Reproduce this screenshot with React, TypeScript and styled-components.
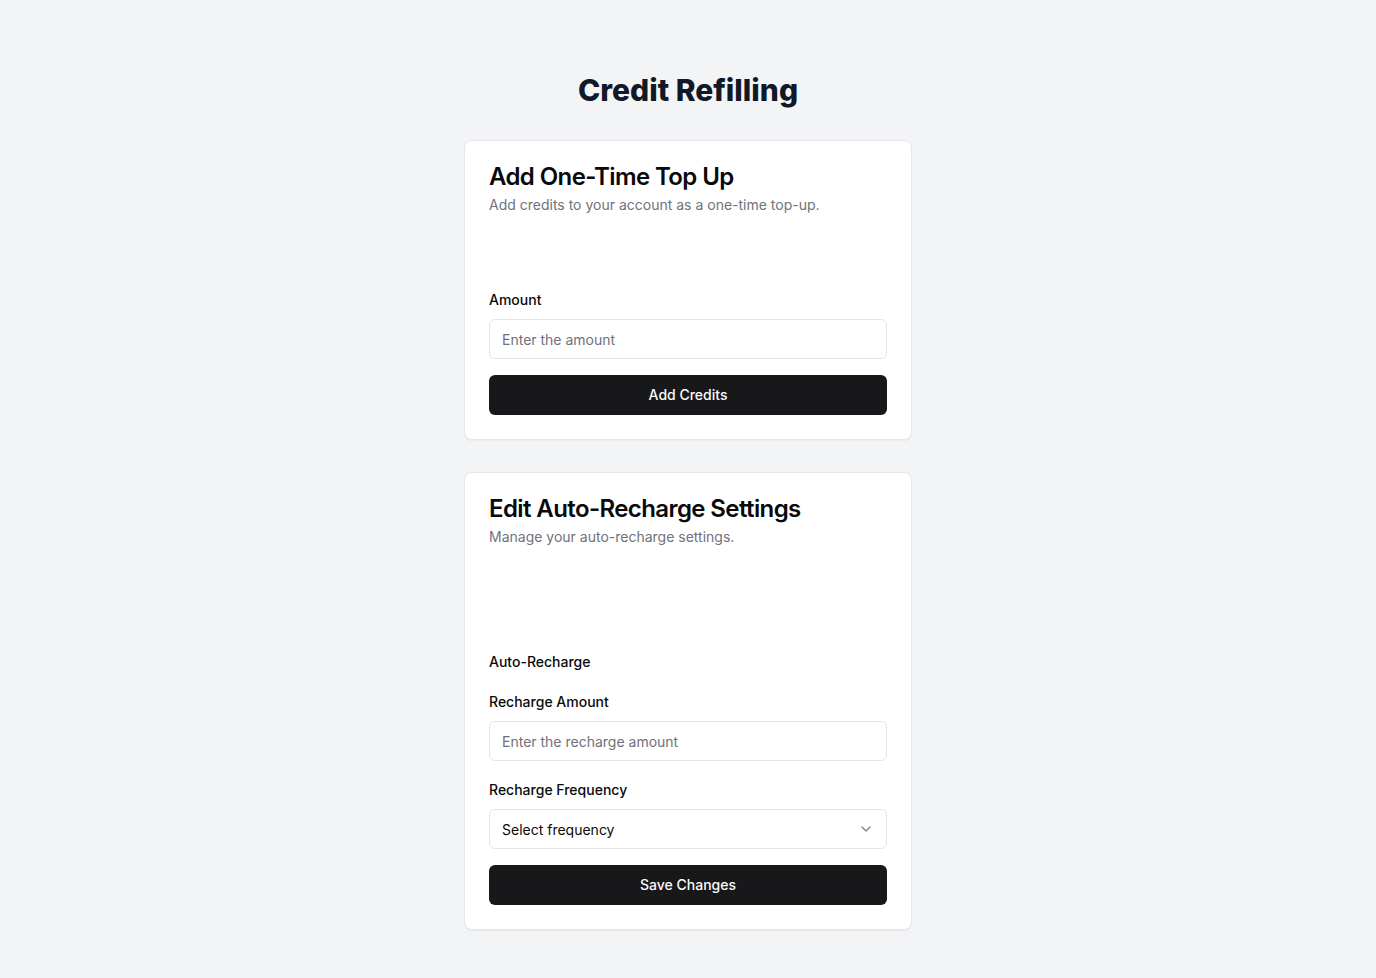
import styled, { createGlobalStyle } from "styled-components";
import { ChevronDown } from "lucide-react";

const GlobalStyle = createGlobalStyle`
  * {
    box-sizing: border-box;
  }
  body {
    margin: 0;
    background: #f3f4f6;
    font-family: Inter, "Noto Sans", sans-serif;
    color: #09090b;
  }
`;

interface FieldProps {
  label: string;
  placeholder: string;
}

function Field(props: FieldProps) {
  return (
    <FieldGroup>
      <Label>{props.label}</Label>
      <Input placeholder={props.placeholder} />
    </FieldGroup>
  );
}

function App() {
  return (
    <Page>
      <GlobalStyle />
      <PageTitle>Credit Refilling</PageTitle>
      <Stack>
        <Card>
          <CardHeader>
            <CardTitle>Add One-Time Top Up</CardTitle>
            <CardDescription>Add credits to your account as a one-time top-up.</CardDescription>
          </CardHeader>
          <CardContent>
            <Spacer size={51} />
            <Field label="Amount" placeholder="Enter the amount" />
            <Button>Add Credits</Button>
          </CardContent>
        </Card>

        <Card>
          <CardHeader>
            <CardTitle>Edit Auto-Recharge Settings</CardTitle>
            <CardDescription>Manage your auto-recharge settings.</CardDescription>
          </CardHeader>
          <CardContent>
            <Spacer size={81} />
            <Label>Auto-Recharge</Label>
            <Spacer size={20} />
            <Field label="Recharge Amount" placeholder="Enter the recharge amount" />
            <Spacer size={3} />
            <FieldGroup>
              <Label>Recharge Frequency</Label>
              <SelectTrigger type="button">
                <span>Select frequency</span>
                <ChevronDown size={16} strokeWidth={2} />
              </SelectTrigger>
            </FieldGroup>
            <Button>Save Changes</Button>
          </CardContent>
        </Card>
      </Stack>
    </Page>
  );
}

export default App;

const Page = styled.main`
  min-height: 100vh;
  padding: 72px 16px 48px;
  display: flex;
  flex-direction: column;
  align-items: center;
`;

const PageTitle = styled.h1`
  margin: 0 0 32px;
  font-size: 30px;
  line-height: 36px;
  font-weight: 800;
  color: #111827;
  text-align: center;
`;

const Stack = styled.div`
  width: 448px;
  display: flex;
  flex-direction: column;
  gap: 32px;
`;

const Card = styled.section`
  background: #ffffff;
  border: 1px solid #e5e7eb;
  border-radius: 8px;
  box-shadow: 0 1px 2px rgba(0, 0, 0, 0.05);
`;

const CardHeader = styled.div`
  padding: 24px 24px 24px;
  display: flex;
  flex-direction: column;
  gap: 6px;
`;

const CardTitle = styled.h2`
  margin: 0;
  font-size: 24px;
  line-height: 24px;
  font-weight: 600;
  letter-spacing: -0.6px;
  color: #09090b;
`;

const CardDescription = styled.p`
  margin: 0;
  font-size: 14px;
  line-height: 20px;
  color: #71717a;
`;

const CardContent = styled.div`
  padding: 0 24px 24px;
  display: flex;
  flex-direction: column;
`;

const Spacer = styled.div<{ size: number }>`
  height: ${(p) => p.size}px;
  flex-shrink: 0;
`;

const FieldGroup = styled.div`
  display: flex;
  flex-direction: column;
  gap: 9px;
  margin-bottom: 16px;
`;

const Label = styled.label`
  font-size: 14px;
  line-height: 20px;
  font-weight: 500;
  color: #09090b;
`;

const Input = styled.input`
  height: 40px;
  width: 100%;
  padding: 0 12px;
  border: 1px solid #e4e4e7;
  border-radius: 6px;
  background: #ffffff;
  font-family: inherit;
  font-size: 14px;
  color: #09090b;
  outline: none;

  &::placeholder {
    color: #71717a;
  }
`;

const SelectTrigger = styled.button`
  height: 40px;
  width: 100%;
  padding: 0 12px;
  border: 1px solid #e4e4e7;
  border-radius: 6px;
  background: #ffffff;
  display: flex;
  align-items: center;
  justify-content: space-between;
  font-family: inherit;
  font-size: 14px;
  color: #09090b;
  cursor: pointer;

  svg {
    opacity: 0.5;
  }
`;

const Button = styled.button`
  height: 40px;
  width: 100%;
  padding: 0 0 2px;
  border: none;
  border-radius: 6px;
  background: #18181b;
  color: #fafafa;
  font-family: inherit;
  font-size: 14px;
  font-weight: 500;
  cursor: pointer;
`;
